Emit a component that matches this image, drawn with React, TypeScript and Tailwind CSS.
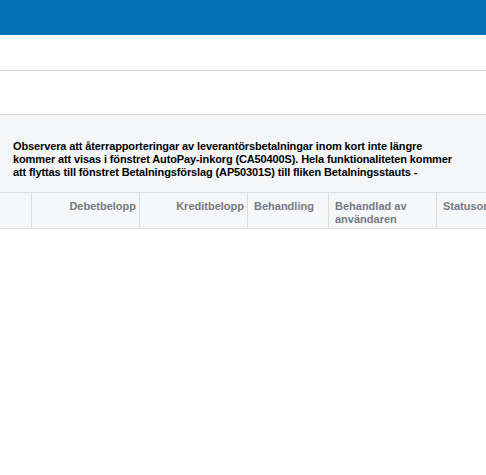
const columns = [
	{ label: '', width: 'w-[31px]', align: 'text-left' },
	{ label: 'Debetbelopp', width: 'w-[108px]', align: 'text-right' },
	{ label: 'Kreditbelopp', width: 'w-[108px]', align: 'text-right' },
	{ label: 'Behandling', width: 'w-[81px]', align: 'text-left' },
	{ label: 'Behandlad av användaren', width: 'w-[108px]', align: 'text-left' },
	{ label: 'Statusorsak', width: 'w-[108px]', align: 'text-left' },
];

export default function App() {
	return (
		<div className="w-[486px] h-[475px] overflow-hidden bg-white font-['Liberation_Sans',Arial,sans-serif]">
			<div className="h-[35px] bg-[#0071b5]" />
			<div className="h-[36px] border-b border-[#d6d6d8]" />
			<div className="h-[44px] border-b border-[#d6d6d8]" />

			<div className="bg-[#f5f6f8]">
				<p className="pl-[13px] pt-[25px] pb-[13px] text-[11px] leading-[13px] tracking-[-0.12px] font-bold text-black whitespace-nowrap">
					Observera att återrapporteringar av leverantörsbetalningar inom kort inte längre
					<br />
					kommer att visas i fönstret AutoPay-inkorg (CA50400S). Hela funktionaliteten kommer
					<br />
					att flyttas till fönstret Betalningsförslag (AP50301S) till fliken Betalningsstauts -
				</p>

				<div className="flex h-[37px] border-y border-[#dcdde0] whitespace-nowrap">
					{columns.map((col, i) => (
						<div
							key={i}
							className={`${col.width} shrink-0 pl-[6px] pr-[3px] pt-[7px] text-[11px] leading-[13px] font-bold text-[#777a82] whitespace-normal ${col.align} ${i > 0 ? 'border-l border-[#dcdde0]' : ''}`}
						>
							{col.label}
						</div>
					))}
				</div>
			</div>
		</div>
	);
}
